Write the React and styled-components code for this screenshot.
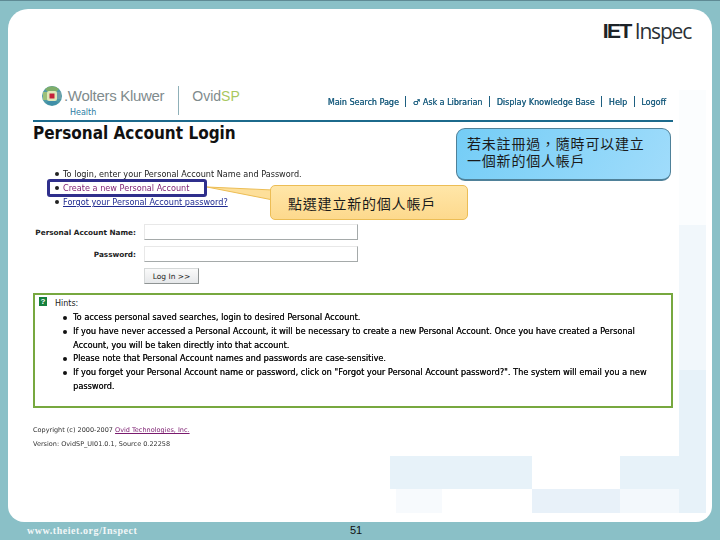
import { createGlobalStyle } from "styled-components";
import styled from "styled-components";

const GlobalStyle = createGlobalStyle`
  html, body {
    margin: 0;
    padding: 0;
    background: #8ac0c7;
  }
`;

const Page = styled.div`
  width: 720px;
  height: 540px;
  box-sizing: border-box;
  background: #8ac0c7;
  border-top: 1px solid #5f8a94;
  padding: 8px 8px 0;
  display: flex;
  flex-direction: column;
  overflow: hidden;
  font-family: "DejaVu Sans", sans-serif;
`;

const Slide = styled.div`
  height: 513px;
  flex: none;
  box-sizing: border-box;
  border-radius: 20px 20px 16px 16px;
  padding: 8px 6px 0 25px;
  background-color: #fff;
  background-repeat: no-repeat;
  background-image:
    linear-gradient(#e7f2f9, #e7f2f9),
    linear-gradient(#f1f7fb, #f1f7fb),
    linear-gradient(#fbfdfe, #fbfdfe),
    linear-gradient(#e7f2f9, #e7f2f9),
    linear-gradient(#e7f2f9, #e7f2f9),
    linear-gradient(#e8f1f9, #e8f1f9),
    linear-gradient(#f3f8fc, #f3f8fc),
    linear-gradient(#f7fafd, #f7fafd);
  background-size:
    27px 143px,
    27px 145px,
    27px 135px,
    142px 33px,
    86px 33px,
    88px 24px,
    86px 24px,
    46px 24px;
  background-position:
    671px 361px,
    671px 216px,
    671px 81px,
    382px 447px,
    612px 447px,
    524px 480px,
    612px 480px,
    388px 480px;
`;

const BrandRow = styled.div`
  height: 65px;
  display: flex;
  justify-content: flex-end;
  padding-right: 15px;
`;

const Brand = styled.div`
  height: 27px;
  display: flex;
  align-items: center;
  gap: 4px;
  color: #1d2328;
`;

const BrandMark = styled.span`
  font: 900 21px "Liberation Sans", sans-serif;
  letter-spacing: -1.6px;
`;

const BrandName = styled.span`
  font: 400 21px "Open Sans", sans-serif;
  letter-spacing: -1.2px;
  color: #2b3136;
`;

const Screen = styled.div`
  position: relative;
  width: 640px;
`;

const Header = styled.header`
  height: 38px;
  display: flex;
  border-bottom: 2px solid #1c6a8c;
`;

const Logo = styled.div`
  display: grid;
  grid-template-columns: 20px auto;
  grid-template-rows: 21px 12px;
  padding: 4px 0 0 9px;
  column-gap: 2px;
`;

const LogoName = styled.span`
  font: 400 15px "Liberation Sans", sans-serif;
  letter-spacing: -0.3px;
  color: #7f8b8d;
  line-height: 20px;
  white-space: nowrap;
`;

const LogoSub = styled.span`
  grid-column: 2;
  padding-left: 6px;
  font: 400 8px "DejaVu Sans", sans-serif;
  line-height: 12px;
  color: #2b7ca3;
`;

const Divider = styled.div`
  width: 1px;
  height: 29px;
  margin: 4px 13px 0 14px;
  background: #8fb0b8;
`;

const Product = styled.div`
  padding-top: 4px;
  font: 400 14px "Liberation Sans", sans-serif;
  line-height: 20px;
  color: #7f8b8d;
`;

const ProductAccent = styled.span`
  color: #a9c85f;
`;

const Nav = styled.nav`
  margin-left: auto;
  padding: 14px 7px 0 0;
  display: flex;
  align-items: flex-start;
  font-size: 8px;
  line-height: 13px;
  color: #1d5f80;
  text-shadow: 0.25px 0 0 currentColor;
  white-space: nowrap;
  filter: blur(0.25px);
`;

const NavSeparator = styled.span`
  width: 1px;
  height: 11px;
  margin: 0 6.6px;
  background: #1d5f80;
`;

const Title = styled.h1`
  margin: 0;
  font-family: "DejaVu Sans Condensed", "DejaVu Sans", sans-serif;
  font-stretch: condensed;
  font-size: 17px;
  line-height: 22px;
  font-weight: 700;
  color: #111;
`;

const Intro = styled.ul`
  margin: 23px 0 0;
  padding: 0 0 0 22px;
  list-style: none;
  font-size: 8.15px;
  line-height: 14px;
  color: #222;
  filter: blur(0.35px);
`;

const IntroItem = styled.li`
  display: flex;
  gap: 4px;
  &::before {
    content: "";
    flex: none;
    width: 4px;
    height: 4px;
    margin-top: 5px;
    border-radius: 50%;
    background: #222;
  }
`;

const IntroLink = styled.a`
  color: ${(props) => props.$color};
  text-decoration: ${(props) => (props.$underline ? "underline" : "none")};
`;

const Form = styled.div`
  margin-top: 15px;
  display: grid;
  grid-template-columns: 103px 214px;
  grid-auto-rows: 16px;
  column-gap: 8px;
  row-gap: 6px;
  align-items: center;
`;

const Label = styled.label`
  font-size: 7.3px;
  font-weight: 700;
  text-align: right;
  white-space: nowrap;
  color: #222;
`;

const Field = styled.div`
  height: 16px;
  box-sizing: border-box;
  border: 1px solid #a5aaaa;
  border-top-color: #e8e8e8;
  border-left-color: #e8e8e8;
`;

const SubmitButton = styled.button`
  grid-column: 2;
  width: 55px;
  height: 16px;
  padding: 0;
  border: 1px solid #8f9494;
  border-top-color: #d5d8d8;
  border-left-color: #d5d8d8;
  background: linear-gradient(#fafafa, #e6e8ea);
  font: 400 7.5px "DejaVu Sans", sans-serif;
  color: #222;
`;

const Hints = styled.section`
  margin-top: 9px;
  height: 115px;
  box-sizing: border-box;
  border: 2px solid #77a83f;
  padding: 3px 4px 2px;
  background: #fff;
`;

const HintsHead = styled.div`
  display: flex;
  align-items: flex-start;
  gap: 8px;
  font-size: 8px;
  line-height: 12px;
  color: #222;
`;

const HelpIcon = styled.span`
  width: 8px;
  height: 9px;
  margin-top: -1px;
  background: #15803d;
  color: #fff;
  font: 700 8px/9px "Liberation Sans", sans-serif;
  text-align: center;
`;

const HintList = styled.ul`
  margin: 1px 0 0;
  padding: 0 0 0 24px;
  list-style: none;
  font-size: 8.2px;
  line-height: 13.8px;
  color: #111;
  text-shadow: 0.2px 0 0 currentColor;
  filter: blur(0.2px);
`;

const HintItem = styled.li`
  display: flex;
  gap: 6px;
  &::before {
    content: "";
    flex: none;
    width: 4px;
    height: 4px;
    margin-top: 5px;
    border-radius: 50%;
    background: #111;
  }
`;

const Legal = styled.p`
  margin: ${(props) => props.$top}px 0 0;
  font-size: 6.5px;
  line-height: 10px;
  color: #333;
  filter: blur(0.35px);
`;

const LegalLink = styled.a`
  color: #7a1a6e;
  text-decoration: underline;
`;

const Highlight = styled.div`
  position: absolute;
  left: 14px;
  top: 97px;
  width: 160px;
  height: 18px;
  box-sizing: border-box;
  border: 3px solid #2f2f8c;
  border-radius: 3px;
`;

const Callout = styled.div`
  position: absolute;
  box-sizing: border-box;
  font-family: "Noto Sans CJK TC", sans-serif;
  font-size: 14px;
  letter-spacing: 0.8px;
  color: #1a1a1a;
`;

const BlueCallout = styled(Callout)`
  left: 423px;
  top: 46px;
  width: 215px;
  height: 53px;
  padding: 6px 10px;
  line-height: 17px;
  border: 1px solid #4f8199;
  border-bottom-width: 2px;
  border-radius: 9px;
  background: linear-gradient(120deg, #74cdf6, #a0dcfb);
`;

const OrangeCallout = styled(Callout)`
  left: 237px;
  top: 103px;
  width: 198px;
  height: 35px;
  padding: 7px 17px;
  line-height: 20px;
  border: 1px solid #ecbd55;
  border-radius: 5px;
  background: linear-gradient(#ffe6a8, #fdd98d);
`;

const Pointer = styled.svg`
  position: absolute;
  left: 174px;
  top: 104px;
  width: 66px;
  height: 16px;
`;

const Footer = styled.footer`
  flex: 1;
  display: flex;
  align-items: center;
  padding: 0 0 0 19px;
  margin-top: -2px;
`;

const FooterUrl = styled.span`
  width: 323px;
  font: 700 10px "Liberation Serif", serif;
  letter-spacing: 0.55px;
  color: #f2f7f8;
`;

const PageNumber = styled.span`
  font: 400 11px "Liberation Sans", sans-serif;
  color: #111;
`;

const Globe = () => (
  <svg width="20" height="20" viewBox="0 0 20 20">
    <circle cx="10" cy="10" r="10" fill="#4f9aa6" />
    <path d="M3 3 A10 10 0 0 1 17 3 L13 7 H7 Z" fill="#7fae6a" />
    <path d="M1 6 H6 V14 H1 Z" fill="#9cc07a" />
    <path d="M14 6 H19 V13 H14 Z" fill="#6fa0a8" />
    <path d="M4 17 L7 14 H13 L16 17 A10 10 0 0 1 4 17 Z" fill="#3f8ea8" />
    <rect x="5" y="5" width="10" height="10" rx="2" fill="#dfe8b8" />
    <rect x="7.5" y="7.5" width="5" height="5" fill="#c4203a" />
  </svg>
);

const App = () => {
  return (
    <>
      <GlobalStyle />
      <Page>
        <Slide>
          <BrandRow>
            <Brand>
              <BrandMark>IET</BrandMark>
              <BrandName>Inspec</BrandName>
            </Brand>
          </BrandRow>
          <Screen>
            <Header>
              <Logo>
                <Globe />
                <LogoName>.Wolters Kluwer</LogoName>
                <LogoSub>Health</LogoSub>
              </Logo>
              <Divider />
              <Product>
                Ovid<ProductAccent>SP</ProductAccent>
              </Product>
              <Nav>
                <span>Main Search Page</span>
                <NavSeparator />
                <span>♂ Ask a Librarian</span>
                <NavSeparator />
                <span>Display Knowledge Base</span>
                <NavSeparator />
                <span>Help</span>
                <NavSeparator />
                <span>Logoff</span>
              </Nav>
            </Header>
            <Title>Personal Account Login</Title>
            <Intro>
              <IntroItem>To login, enter your Personal Account Name and Password.</IntroItem>
              <IntroItem>
                <IntroLink $color="#7a1a6e">Create a new Personal Account</IntroLink>
              </IntroItem>
              <IntroItem>
                <IntroLink $color="#1f2a90" $underline>
                  Forgot your Personal Account password?
                </IntroLink>
              </IntroItem>
            </Intro>
            <Form>
              <Label>Personal Account Name:</Label>
              <Field />
              <Label>Password:</Label>
              <Field />
              <SubmitButton>Log In &gt;&gt;</SubmitButton>
            </Form>
            <Hints>
              <HintsHead>
                <HelpIcon>?</HelpIcon>
                Hints:
              </HintsHead>
              <HintList>
                <HintItem>To access personal saved searches, login to desired Personal Account.</HintItem>
                <HintItem>
                  If you have never accessed a Personal Account, it will be necessary to create a new
                  Personal Account. Once you have created a Personal Account, you will be taken directly
                  into that account.
                </HintItem>
                <HintItem>Please note that Personal Account names and passwords are case-sensitive.</HintItem>
                <HintItem>
                  If you forget your Personal Account name or password, click on "Forgot your Personal
                  Account password?". The system will email you a new password.
                </HintItem>
              </HintList>
            </Hints>
            <Legal $top={17}>
              Copyright (c) 2000-2007 <LegalLink>Ovid Technologies, Inc.</LegalLink>
            </Legal>
            <Legal $top={4}>Version: OvidSP_UI01.0.1, Source 0.22258</Legal>
            <Highlight />
            <Pointer viewBox="0 0 66 16">
              <path d="M0 1 L66 4 L66 14 Z" fill="#fddf9a" stroke="#ecbd55" strokeWidth="1" />
            </Pointer>
            <BlueCallout>
              {"若未註冊過\uFF0C隨時可以建立"}
              <br />
              一個新的個人帳戶
            </BlueCallout>
            <OrangeCallout>點選建立新的個人帳戶</OrangeCallout>
          </Screen>
        </Slide>
        <Footer>
          <FooterUrl>www.theiet.org/Inspect</FooterUrl>
          <PageNumber>51</PageNumber>
        </Footer>
      </Page>
    </>
  );
};

export default App;
